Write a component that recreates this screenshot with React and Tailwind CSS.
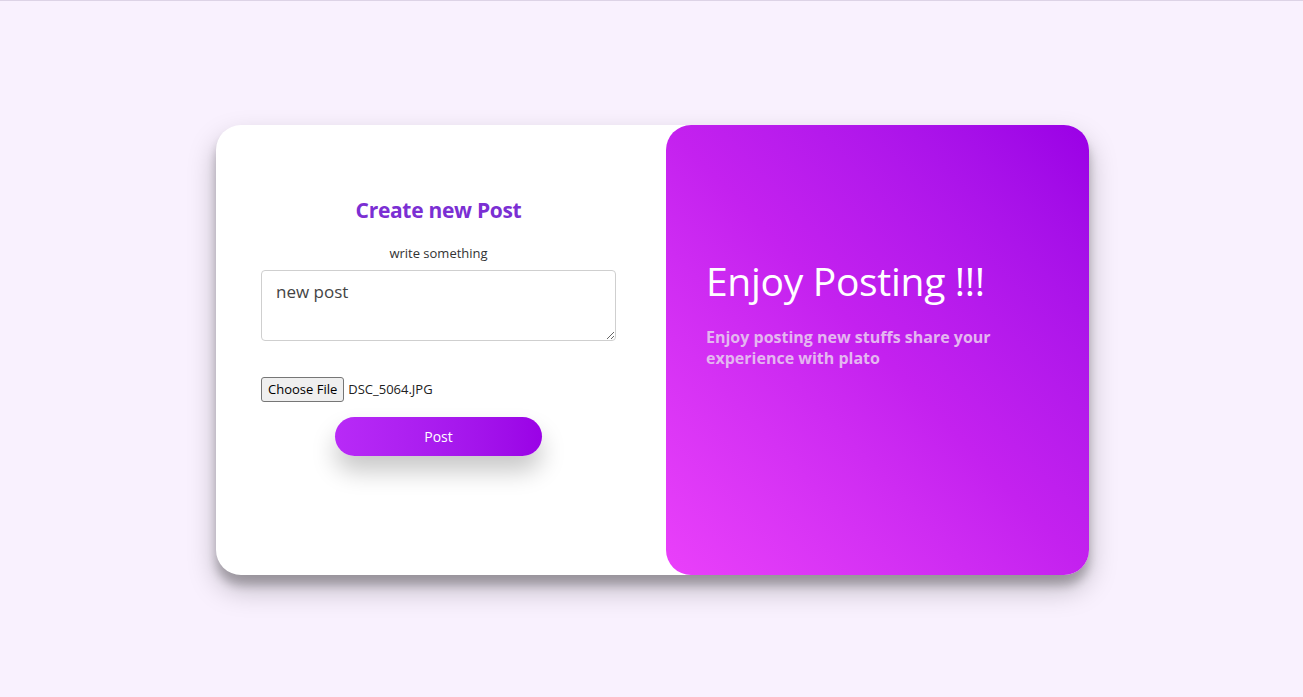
import React, { useState } from "react";

export default function App() {
  const [text, setText] = useState("new post");

  return (
    <div
      className="min-h-screen w-full bg-[#f9f1fe] border-t border-[#ddd3e6] flex justify-center pt-[124px] pl-[2px]"
      style={{ fontFamily: '"Open Sans", "Noto Sans", sans-serif' }}
    >
      <div className="flex w-[873px] h-[450px] bg-white rounded-[25px] shadow-[0_14px_28px_rgba(0,0,0,0.25),0_10px_10px_rgba(0,0,0,0.22)]">
        {/* Form side */}
        <div className="w-[450px] pl-[45px] pr-[50px] flex flex-col items-center pt-[72px]">
          <h1 className="text-[21px] font-bold text-[#7b2fd3] tracking-[-0.3px] leading-[26px]">
            Create new Post
          </h1>
          <label className="mt-[22px] text-[13px] text-[#333] leading-[16px]">
            write something
          </label>
          <textarea
            value={text}
            onChange={(e) => setText(e.target.value)}
            className="mt-[9px] w-full h-[71px] rounded-[4px] border border-[#cfcfcf] px-[14px] py-[8px] text-[17px] text-[#444] outline-none"
          />
          <div className="w-full mt-[36px] flex items-center gap-[4px] text-[13px] text-[#222]">
            <button className="h-[25px] px-[6px] bg-[#efefef] border border-[#767676] rounded-[3px] text-[13px] text-black">
              Choose File
            </button>
            <span>DSC_5064.JPG</span>
          </div>
          <button className="mt-[15px] w-[207px] h-[39px] rounded-full bg-gradient-to-r from-[#b82af7] to-[#9a02e6] text-white text-[14px] shadow-[0_15px_25px_rgba(0,0,0,0.22)]">
            Post
          </button>
        </div>

        {/* Overlay side */}
        <div className="flex-1 rounded-[25px] bg-gradient-to-tr from-[#ea40fa] via-[#c421ef] to-[#9a00e6] px-[40px] pt-[132px]">
          <h2 className="text-[39px] text-white leading-[48px] tracking-[-0.3px]">
            Enjoy Posting !!!
          </h2>
          <p className="mt-[22px] w-[310px] text-[16px] font-bold leading-[21px] text-[#e4b6f0]">
            Enjoy posting new stuffs share your experience with plato
          </p>
        </div>
      </div>
    </div>
  );
}
